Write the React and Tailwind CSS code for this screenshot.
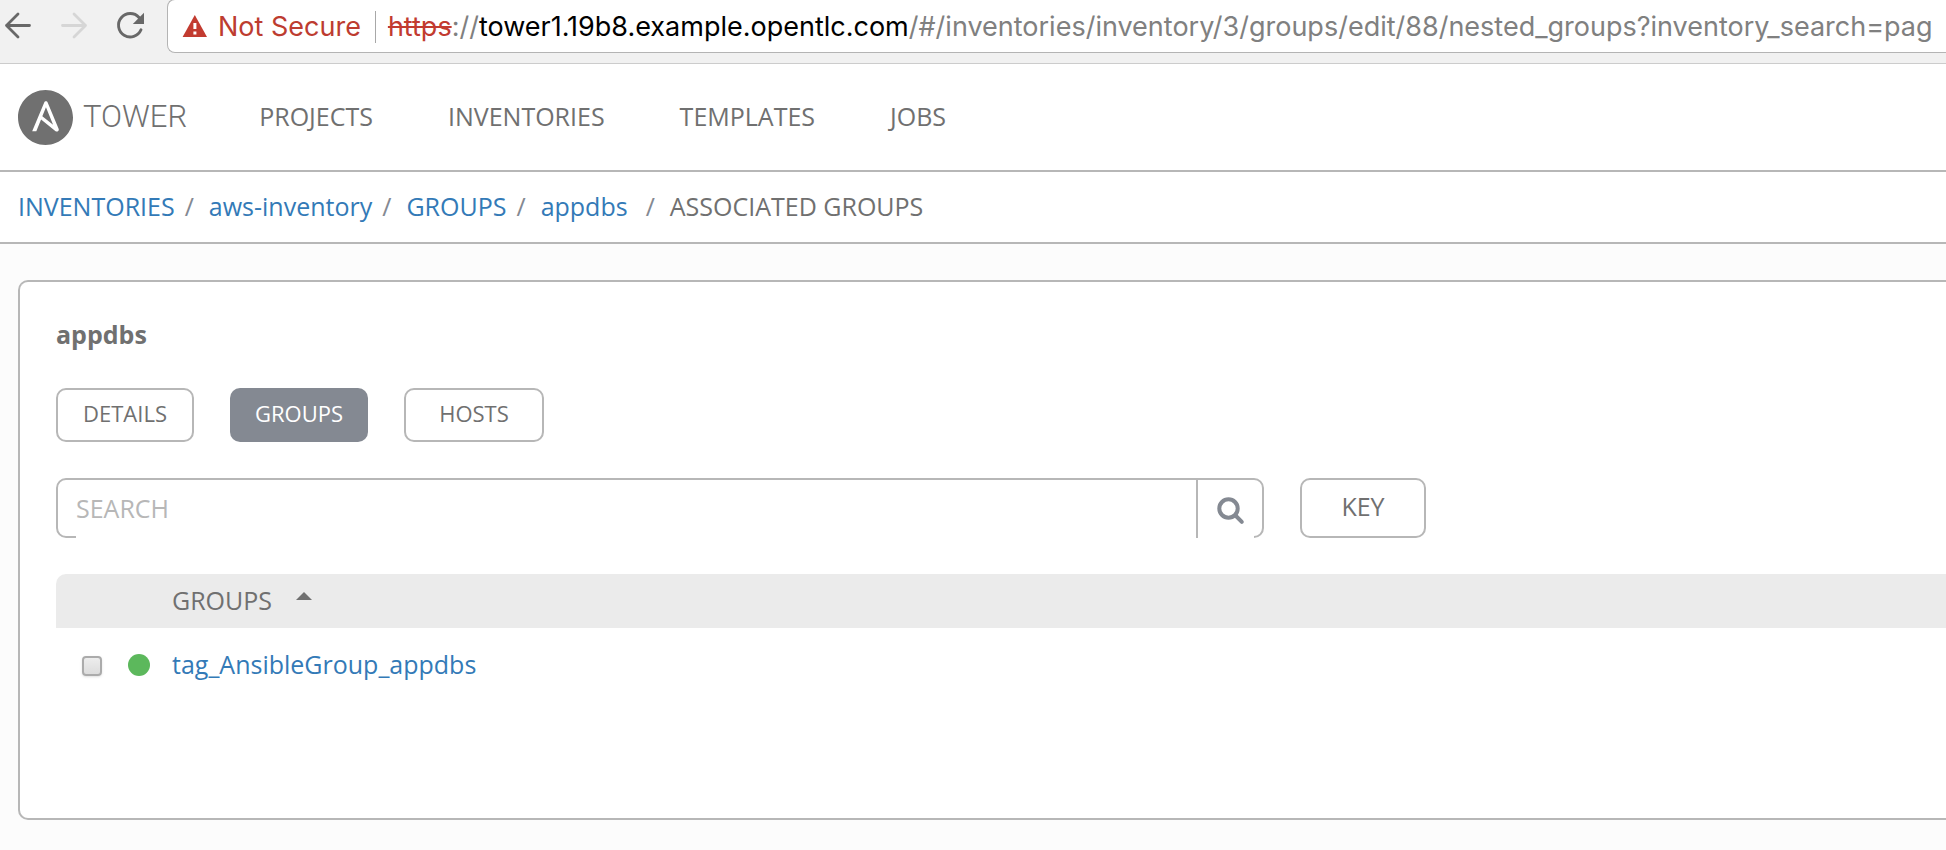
import React from 'react';

function BrowserBar() {
  return (
    <div className="flex h-16 items-start overflow-hidden border-b border-[#cccccc] bg-[#f1f1f1]">
      <div className="flex h-[52px] w-[167px] shrink-0 items-center">
        <button type="button" aria-label="Back" className="h-9 w-9 shrink-0">
          <svg width="36" height="36" viewBox="0 0 36 36" fill="none" stroke="#686868" strokeWidth="2.8" strokeLinecap="round" strokeLinejoin="round">
            <path d="M29.5 17.5H6.5M18 6L6.5 17.5L18 29" />
          </svg>
        </button>
        <button type="button" aria-label="Forward" className="ml-5 h-9 w-9 shrink-0">
          <svg width="36" height="36" viewBox="0 0 36 36" fill="none" stroke="#d6d6d6" strokeWidth="2.8" strokeLinecap="round" strokeLinejoin="round">
            <path d="M6.5 17.5H29.5M18 6L29.5 17.5L18 29" />
          </svg>
        </button>
        <button type="button" aria-label="Reload" className="ml-5 h-9 w-9 shrink-0">
          <svg width="36" height="36" viewBox="0 0 36 36" fill="none">
            <path d="M27 9.5A11.7 11.7 0 1 0 29 21.8" stroke="#686868" strokeWidth="2.9" strokeLinecap="round" />
            <path d="M32 4.8V16H20.8Z" fill="#686868" />
          </svg>
        </button>
      </div>
      <div className="-mt-px flex h-[54px] min-w-0 flex-1 items-center overflow-hidden whitespace-nowrap rounded-l-lg border border-r-0 border-[#b4b4b4] bg-white pl-3.5 pt-0.5 font-[Inter,sans-serif] text-[27px]">
        <svg width="26" height="26" viewBox="0 0 26 26" className="shrink-0" aria-hidden="true">
          <path d="M12.8 1L25 23H.6Z" fill="#c23b30" />
          <path d="M11.4 9h3v6h-3zM11.4 17.5h3v3h-3z" fill="#fff" />
        </svg>
        <span className="ml-2.5 text-[#bd3c30]">Not Secure</span>
        <span className="ml-3.5 h-8 w-px shrink-0 bg-[#a8a8a8]" />
        <span className="ml-3 text-[#808080]">
          <s className="text-[#c23b30] decoration-2">https</s>://
          <span className="text-black">tower1.19b8.example.opentlc.com</span>
          /#/inventories/inventory/3/groups/edit/88/nested_groups?inventory_search=pag
        </span>
      </div>
    </div>
  );
}

const navItems = ['PROJECTS', 'INVENTORIES', 'TEMPLATES', 'JOBS'];

function Header() {
  return (
    <header className="flex h-[108px] items-center border-b-2 border-[#b7b7b7] bg-white pl-[18px]">
      <a href="#/home" className="flex items-center gap-2.5">
        <svg width="55" height="55" viewBox="0 0 24 24" fill="#707070" aria-hidden="true">
          <path d="M10.617 11.473l4.686 3.695-3.102-7.662zM12 0C5.371 0 0 5.371 0 12s5.371 12 12 12 12-5.371 12-12S18.629 0 12 0zm5.797 17.305c-.011.471-.403.842-.875.83-.236 0-.416-.09-.664-.293l-6.19-5-2.079 5.203H6.191L11.438 5.44c.124-.314.427-.52.764-.506.326-.014.63.189.742.506l4.774 11.494c.045.111.08.234.08.348z" />
        </svg>
        <span className="font-[Roboto,sans-serif] text-[31px] font-light text-[#707070]">TOWER</span>
      </a>
      <nav className="ml-[72px] flex gap-[75px] pb-0.5">
        {navItems.map((item) => (
          <a key={item} href={'#/' + item.toLowerCase()}>{item}</a>
        ))}
      </nav>
    </header>
  );
}

const crumbs = ['INVENTORIES', 'aws-inventory', 'GROUPS'];

function Breadcrumbs() {
  return (
    <nav aria-label="Breadcrumb" className="flex h-[72px] items-center border-b-2 border-[#b7b7b7] bg-white pb-0.5 pl-[18px]">
      <ol className="flex">
        {crumbs.map((crumb) => (
          <li key={crumb} className="flex">
            <a href="#/inventories" className="text-[#337ab7]">{crumb}</a>
            <span className="pl-2.5 pr-[15px] text-[#848992]">/</span>
          </li>
        ))}
        <li className="flex">
          <a href="#/groups" className="text-[#337ab7]">appdbs</a>
          <span className="pl-[18px] pr-[15px] text-[#848992]">/</span>
        </li>
        <li aria-current="page">ASSOCIATED GROUPS</li>
      </ol>
    </nav>
  );
}

function SearchRow() {
  return (
    <div className="mt-9 flex gap-9">
      <form className="flex h-[60px] max-w-[1208px] flex-1 rounded-[10px] border-2 border-[#b7b7b7] pl-[18px]">
        <input
          type="text"
          aria-label="Search"
          placeholder="SEARCH"
          className="-mb-0.5 min-w-0 flex-1 bg-white pb-0.5 outline-none placeholder:text-[#b7b7b7]"
        />
        <button
          type="button"
          aria-label="Run search"
          className="-mb-0.5 mr-2 flex w-[58px] items-center justify-end border-l-2 border-[#b7b7b7] bg-white pr-2"
        >
          <svg width="30" height="30" viewBox="0 0 30 30" fill="none" stroke="#848992" strokeLinecap="round" className="mt-1">
            <circle cx="12.5" cy="12.5" r="9.2" strokeWidth="4" />
            <path d="M19.5 19.5L25.8 25.8" strokeWidth="4" />
          </svg>
        </button>
      </form>
      <button type="button" className="h-[60px] w-[126px] rounded-[10px] border-2 border-[#b7b7b7] pb-1">KEY</button>
    </div>
  );
}

function GroupsTable() {
  return (
    <table className="mt-9 w-full border-separate border-spacing-0 text-left">
      <thead>
        <tr className="h-[54px]">
          <th className="w-[72px] rounded-tl-[10px] bg-[#ebebeb]" aria-label="Select" />
          <th className="w-11 bg-[#ebebeb]" aria-label="Status" />
          <th className="bg-[#ebebeb] pb-0.5 font-normal">
            <button type="button" className="flex items-center gap-6">
              GROUPS
              <svg width="16" height="8" viewBox="0 0 16 8" fill="#707070" className="-mt-2" aria-hidden="true">
                <path d="M8 0L16 8H0Z" />
              </svg>
            </button>
          </th>
        </tr>
      </thead>
      <tbody>
        <tr className="h-[76px]">
          <td className="pl-[26px]">
            <input
              id="group-appdbs"
              type="checkbox"
              aria-label="Select tag_AnsibleGroup_appdbs"
              className="block h-5 w-5 appearance-none rounded border-2 border-[#ababab] bg-linear-to-b from-[#ededed] to-[#dcdcdc] shadow-sm"
            />
          </td>
          <td className="pb-0.5">
            <span className="block h-[22px] w-[22px] rounded-full bg-[#5cb85c]" />
          </td>
          <td className="pb-1">
            <a href="#/groups/appdbs" className="text-[#337ab7]">tag_AnsibleGroup_appdbs</a>
          </td>
        </tr>
      </tbody>
    </table>
  );
}

export default function App() {
  return (
    <div className="min-h-screen overflow-hidden bg-[#fcfcfc] font-['Open_Sans',sans-serif] text-[25px] leading-9 text-[#707070]">
      <BrowserBar />
      <Header />
      <Breadcrumbs />
      <main className="mb-[30px] ml-[18px] mt-9 rounded-l-[10px] border-2 border-r-0 border-[#b7b7b7] bg-white pb-[114px] pl-9 pt-[34px]">
        <h1 className="font-bold">appdbs</h1>
        <div className="mt-9 flex gap-9 text-[22px]">
          <button type="button" className="h-[54px] w-[138px] rounded-[10px] border-2 border-[#b7b7b7] pb-1">DETAILS</button>
          <button type="button" aria-pressed="true" className="h-[54px] w-[138px] rounded-[10px] bg-[#848992] pb-1 text-white">GROUPS</button>
          <button type="button" className="h-[54px] w-[140px] rounded-[10px] border-2 border-[#b7b7b7] pb-1">HOSTS</button>
        </div>
        <SearchRow />
        <GroupsTable />
      </main>
    </div>
  );
}
